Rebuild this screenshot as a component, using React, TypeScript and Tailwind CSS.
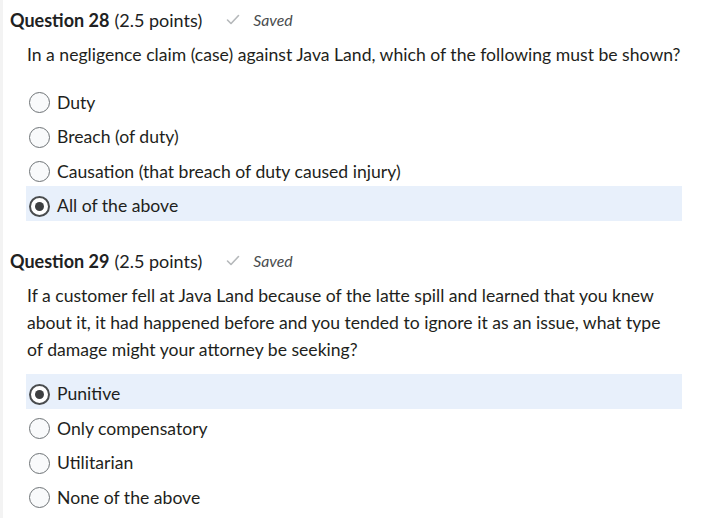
const q28 = ["Duty", "Breach (of duty)", "Causation (that breach of duty caused injury)", "All of the above"];
const q29 = ["Punitive", "Only compensatory", "Utilitarian", "None of the above"];

function Radio({ checked }: { checked: boolean }) {
  if (checked) {
    return (
      <span className="flex h-[21px] w-[21px] shrink-0 items-center justify-center rounded-full border-2 border-[#494c4e] bg-white">
        <span className="h-[9px] w-[9px] rounded-full bg-[#3d3f41]" />
      </span>
    );
  }
  return <span className="h-[21px] w-[21px] shrink-0 rounded-full border border-[#6e7376] bg-[#f9fafb]" />;
}

function Heading({ num }: { num: number }) {
  return (
    <div className="flex h-[24px] items-center text-[18px] leading-[24px] text-[#202122]">
      <span className="font-bold">Question {num}</span>
      <span className="ml-[5px]">(2.5 points)</span>
      <svg className="ml-[24px] mt-[-2px]" width="14" height="11" viewBox="0 0 14 11" fill="none">
        <path d="M1.5 6 L5 9.5 L12.5 1.5" stroke="#b5b8ba" strokeWidth="1.6" strokeLinecap="round" strokeLinejoin="round" />
      </svg>
      <span className="ml-[13px] text-[15.8px] italic text-[#494c4e]">Saved</span>
    </div>
  );
}

function Options({ items, selected }: { items: string[]; selected: number }) {
  return (
    <div className="ml-[16px] w-[656px]">
      {items.map((t, i) => (
        <div
          key={t}
          className={
            i === selected
              ? "flex h-[34.5px] items-center gap-[7px] bg-[#e8f0fb] pl-[3px] pt-[6px] text-[17.6px] text-[#1e1f20]"
              : "flex h-[34.5px] items-center gap-[7px] pl-[3px] pt-[6px] text-[17.6px] text-[#1e1f20]"
          }
        >
          <Radio checked={i === selected} />
          <span>{t}</span>
        </div>
      ))}
    </div>
  );
}

export default function App() {
  return (
    <div className="min-h-[518px] border-l-[3px] border-[#f3f3f3] bg-white pl-[7px] pt-[8px] font-['Lato','Liberation_Sans',sans-serif]">
      <Heading num={28} />
      <p className="ml-[17px] mt-[8.5px] text-[17.6px] leading-[27px] text-[#1e1f20]">
        In a negligence claim (case) against Java Land, which of the following must be shown?
      </p>
      <div className="mt-[15px]">
        <Options items={q28} selected={3} />
      </div>

      <div className="mt-[28.5px]">
        <Heading num={29} />
      </div>
      <p className="ml-[17px] mt-[8.5px] text-[17.6px] leading-[27px] text-[#1e1f20]">
        If a customer fell at Java Land because of the latte spill and learned that you knew
        <br />
        about it, it had happened before and you tended to ignore it as an issue, what type
        <br />
        of damage might your attorney be seeking?
      </p>
      <div className="mt-[11.5px]">
        <Options items={q29} selected={0} />
      </div>
    </div>
  );
}
